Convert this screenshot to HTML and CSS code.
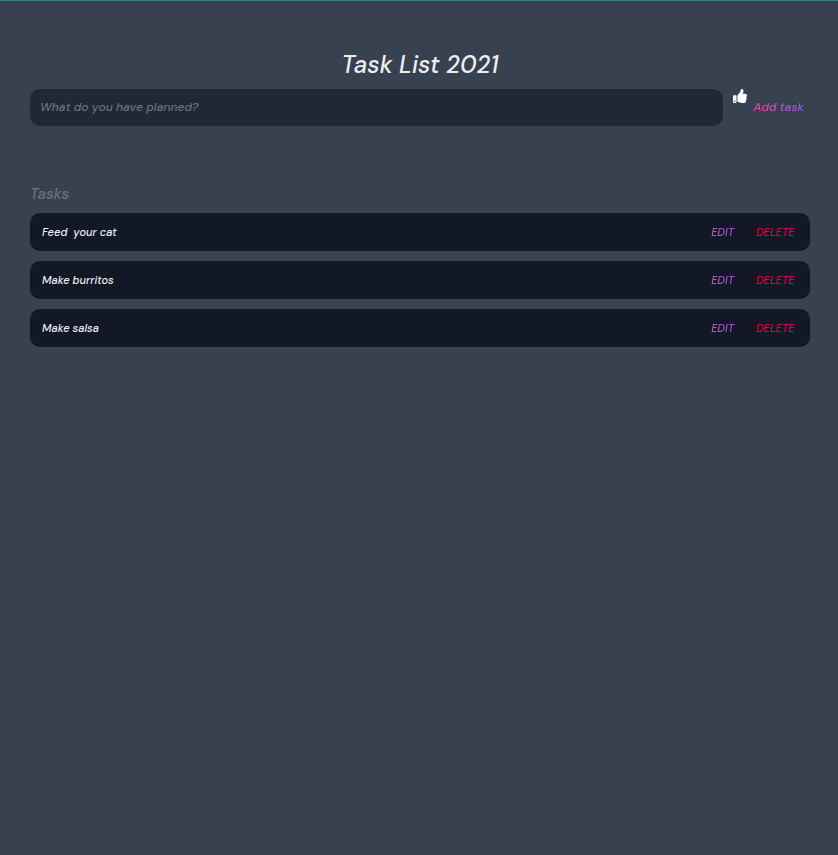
FILE: index.html
```html
<!DOCTYPE html>
<html lang="en">
<head>
<meta charset="utf-8">
<meta name="viewport" content="width=device-width, initial-scale=1">
<title>Task List 2021</title>
<link rel="stylesheet" href="styles.css">
</head>
<body>
<header class="header">
  <h1 class="title">Task List 2021</h1>
  <form class="new-task">
    <input class="new-task-input" type="text" placeholder="What do you have planned?" aria-label="New task">
    <svg class="thumb" viewBox="0 0 512 512" aria-hidden="true"><path fill="currentColor" fill-rule="evenodd" d="M104 224H24c-13 0-24 11-24 24v240c0 13 11 24 24 24h80c13 0 24-11 24-24V248c0-13-11-24-24-24zM64 472a24 24 0 1 1 0-48 24 24 0 0 1 0 48zM384 81.500c0 42.400-26 66.200-33.300 94.500h101.700c33.400 0 59.400 27.700 59.600 58.100.1 17.900-7.500 37.200-19.400 49.200l-.1.100c9.800 23.300 8.200 56-9.300 79.500 8.700 25.900-.1 57.700-16.400 74.800 4.300 17.600 2.200 32.600-6.100 44.600C440.200 511.600 389.600 512 346.800 512H344c-48.300 0-87.800-17.600-119.600-31.700-16-7.100-36.800-15.900-52.700-16.200A12 12 0 0 1 160 452V238c0-3.200 1.300-6.300 3.600-8.500 39.600-39.100 56.600-80.600 89.100-113.100 14.800-14.800 20.200-37.200 25.400-58.900C282.500 39 291.800 0 312 0c24 0 72 8 72 81.500z"/></svg>
    <button class="gradient-button add-button" type="submit">Add task</button>
  </form>
</header>
<main class="task-list">
  <h2 class="subtitle">Tasks</h2>
  <div class="tasks">
    <div class="task">
      <input class="task-text" type="text" value="Feed  your cat" aria-label="Task 1" readonly>
      <button class="gradient-button task-button" type="button">EDIT</button>
      <button class="task-button delete-button" type="button">DELETE</button>
    </div>
    <div class="task">
      <input class="task-text" type="text" value="Make burritos" aria-label="Task 2" readonly>
      <button class="gradient-button task-button" type="button">EDIT</button>
      <button class="task-button delete-button" type="button">DELETE</button>
    </div>
    <div class="task">
      <input class="task-text" type="text" value="Make salsa" aria-label="Task 3" readonly>
      <button class="gradient-button task-button" type="button">EDIT</button>
      <button class="task-button delete-button" type="button">DELETE</button>
    </div>
  </div>
</main>
</body>
</html>
```

FILE: styles.css
```css
:root {
  --page: #38414f;
  --field: #1f2933;
  --row: #121826;
  --muted: #6b7280;
  --light: #eeeeee;
  --pink: #ec4899;
  --violet: #8b5cf6;
  --red: #dc0043;
}

* {
  box-sizing: border-box;
  margin: 0;
}

body,
input,
button {
  font-family: "DM Sans", Inter, sans-serif;
  font-style: italic;
  font-weight: 500;
}

body {
  min-height: 100vh;
  padding: 48px 28px 0 30px;
  border-top: 1px solid #3b8087;
  background: var(--page);
  color: var(--light);
}

input,
button {
  border: 0;
  padding: 0;
  background: none;
  color: inherit;
}

.title {
  font-size: 24px;
  font-weight: 500;
  line-height: 32px;
  text-align: center;
  margin-bottom: 8px;
}

.new-task {
  display: flex;
  align-items: flex-start;
}

.new-task-input {
  flex: 1;
  min-width: 0;
  height: 37px;
  padding: 0 10px 2px;
  border-radius: 10px;
  background: var(--field);
  font-size: 12px;
  margin-right: 10px;
}

.new-task-input::placeholder {
  color: var(--muted);
}

.thumb {
  width: 14px;
  height: 14px;
  color: #ffffff;
}

.gradient-button {
  background: linear-gradient(to right, var(--pink), var(--violet));
  background-clip: text;
  -webkit-background-clip: text;
  color: transparent;
}

.add-button {
  height: 36px;
  padding: 0 6px;
  font-size: 12px;
}

.task-list {
  margin-top: 56px;
}

.subtitle {
  color: var(--muted);
  font-size: 15px;
  font-weight: 500;
  line-height: 24px;
  margin-bottom: 7px;
}

.tasks {
  display: grid;
  gap: 10px;
}

.task {
  display: flex;
  align-items: center;
  height: 38px;
  padding: 0 8px 0 12px;
  border-radius: 10px;
  background: var(--row);
}

.task-text {
  flex: 1;
  min-width: 0;
  font-size: 11px;
}

.task-button {
  padding: 8px;
  margin-left: 6px;
  font-size: 11px;
  line-height: 16px;
}

.delete-button {
  color: var(--red);
}
```
